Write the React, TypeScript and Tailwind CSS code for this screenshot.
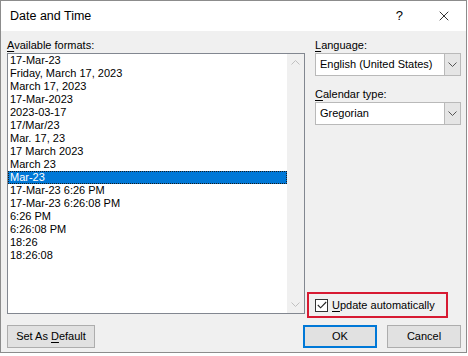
import { X } from 'lucide-react'

const FORMATS = [
  '17-Mar-23',
  'Friday, March 17, 2023',
  'March 17, 2023',
  '17-Mar-2023',
  '2023-03-17',
  '17/Mar/23',
  'Mar. 17, 23',
  '17 March 2023',
  'March 23',
  'Mar-23',
  '17-Mar-23 6:26 PM',
  '17-Mar-23 6:26:08 PM',
  '6:26 PM',
  '6:26:08 PM',
  '18:26',
  '18:26:08',
]

const SELECTED = 'Mar-23'

function Chevron({ up = false, className = '' }: { up?: boolean; className?: string }) {
  return (
    <svg width="9" height="5" viewBox="0 0 9 5" className={className} fill="none">
      <path
        d={up ? 'M0.5 4.5 L4.5 0.5 L8.5 4.5' : 'M0.5 0.5 L4.5 4.5 L8.5 0.5'}
        stroke="currentColor"
        strokeWidth="1"
      />
    </svg>
  )
}

function Label({ accel, rest }: { accel: string; rest: string }) {
  return (
    <div className="h-[15px] whitespace-nowrap leading-[15px]">
      <span className="underline underline-offset-2">{accel}</span>
      {rest}
    </div>
  )
}

function Combo({ value }: { value: string }) {
  return (
    <div className="flex h-[23px] border border-[#b9b9b9] bg-white">
      <div className="flex flex-1 items-center whitespace-nowrap pl-[4px]">{value}</div>
      <div className="flex w-[16px] items-center justify-center border-l border-[#b9b9b9] bg-[#e5e5e5] text-[#555]">
        <Chevron />
      </div>
    </div>
  )
}

function Button({ children, primary = false }: { children: React.ReactNode; primary?: boolean }) {
  return (
    <div
      className={
        primary
          ? 'flex h-[23px] w-[74px] items-center justify-center border-2 border-[#0078d7] bg-[#e1e1e1]'
          : 'flex h-[23px] w-[74px] items-center justify-center border border-[#adadad] bg-[#e1e1e1]'
      }
    >
      {children}
    </div>
  )
}

export default function App() {
  return (
    <div className="h-[356px] w-[468px] bg-white font-['Liberation_Sans',Arial,sans-serif] text-[11px] text-black">
      <div className="flex h-[353px] w-[467px] flex-col border border-[#8c8c8c]">
        {/* Titelleiste */}
        <div className="flex h-[30px] items-center bg-white pl-[9px]">
          <span className="flex-1 text-[12.5px]">Date and Time</span>
          <span className="mr-[33px] text-[13px]">?</span>
          <X size={16} strokeWidth={1.2} className="mr-[14px]" />
        </div>

        <div className="flex flex-1 flex-col bg-[#f0f0f0] pl-[6px] pr-[5px] pt-[7px] pb-[4px]">
          <div className="flex h-[280px] gap-[10px]">
            <div className="flex w-[298px] flex-col">
              <Label accel="A" rest="vailable formats:" />
              <div className="flex h-[261px] border border-[#828790] bg-white">
                <div className="flex-1">
                  {FORMATS.map((f) => (
                    <div
                      key={f}
                      className={
                        f === SELECTED
                          ? 'h-[13px] whitespace-nowrap border border-dotted border-[#1b1b1b] bg-[#0078d7] pl-[1px] leading-[11px] text-white'
                          : 'h-[13px] whitespace-nowrap pl-[2px] leading-[13px]'
                      }
                    >
                      {f}
                    </div>
                  ))}
                </div>
                <div className="flex w-[17px] flex-col justify-between bg-[#f0f0f0] text-[#c0c0c0]">
                  <div className="flex h-[17px] items-center justify-center">
                    <Chevron up />
                  </div>
                  <div className="flex h-[17px] items-center justify-center">
                    <Chevron />
                  </div>
                </div>
              </div>
            </div>

            <div className="flex w-[146px] flex-col">
              <Label accel="L" rest="anguage:" />
              <Combo value="English (United States)" />
              <div className="mt-[11px]">
                <Label accel="C" rest="alendar type:" />
              </div>
              <Combo value="Gregorian" />

              <div className="-ml-[8px] mt-auto flex h-[26px] w-[141px] items-center border-2 border-[#d71a32] pl-[6px]">
                <div className="flex h-[13px] w-[13px] shrink-0 items-center justify-center border border-[#333] bg-white">
                  <svg width="10" height="8" viewBox="0 0 10 8" fill="none">
                    <path d="M0.8 4 L3.6 6.8 L9.2 1" stroke="#222" strokeWidth="1.1" />
                  </svg>
                </div>
                <span className="ml-[4px] whitespace-nowrap">
                  <span className="underline underline-offset-2">U</span>pdate automatically
                </span>
              </div>
            </div>
          </div>

          <div className="mt-[7px] flex items-center">
            <div className="flex h-[23px] w-[88px] items-center justify-center whitespace-nowrap border border-[#adadad] bg-[#e1e1e1]">
              Set As&nbsp;<span className="underline underline-offset-2">D</span>efault
            </div>
            <div className="ml-auto flex gap-[10px]">
              <Button primary>OK</Button>
              <Button>Cancel</Button>
            </div>
          </div>
        </div>
      </div>
    </div>
  )
}
